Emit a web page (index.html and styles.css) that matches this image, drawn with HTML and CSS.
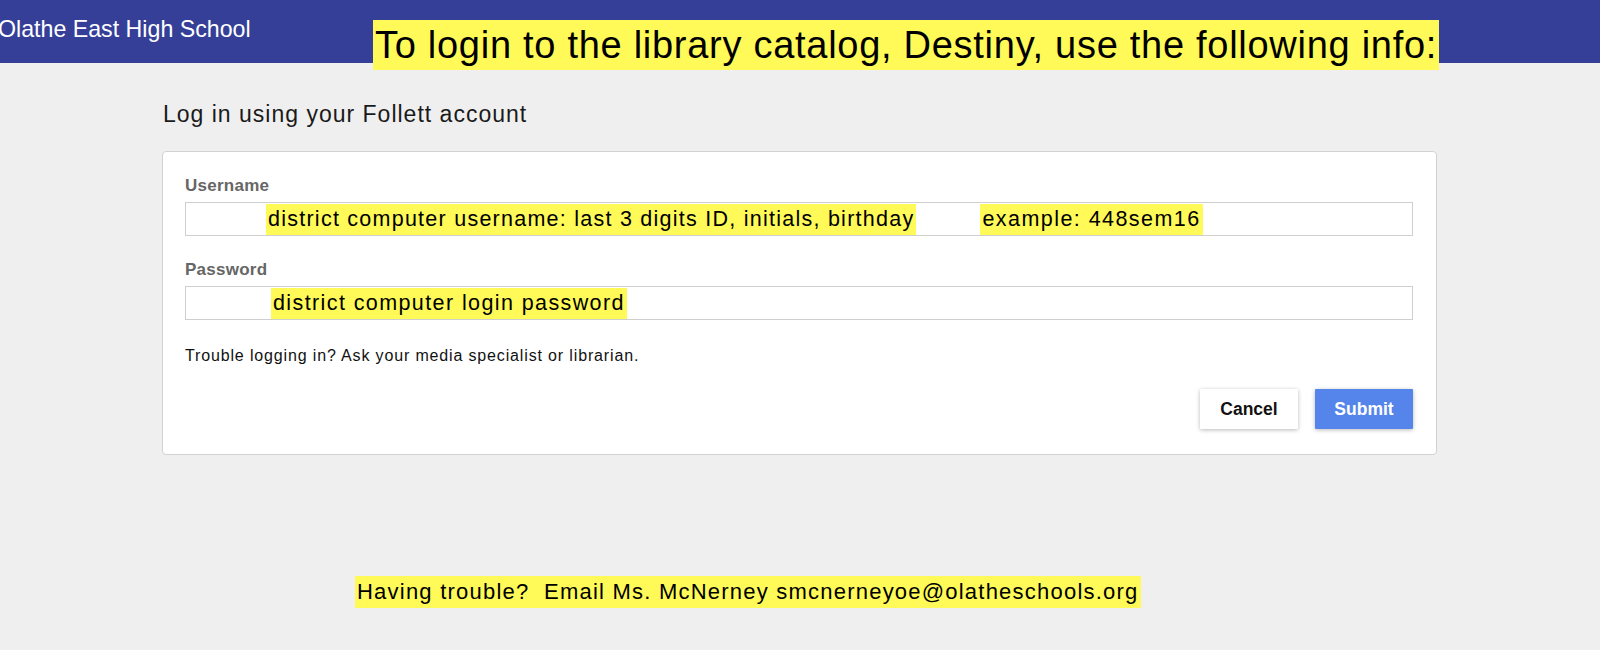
FILE: index.html
```html
<!DOCTYPE html>
<html lang="en">
<head>
<meta charset="utf-8">
<title>Olathe East High School - Destiny login</title>
<link rel="stylesheet" href="styles.css">
</head>
<body>
<header class="topbar">
  <div class="school">Olathe East High School</div>
  <div class="banner">To login to the library catalog, Destiny, use the following info:</div>
</header>
<main class="page">
  <h1 class="subtitle">Log in using your Follett account</h1>
  <section class="card">
    <div class="field">
      <div class="label">Username</div>
      <div class="input">
        <span class="hl hl-user">district computer username: last 3 digits ID, initials, birthday</span>
        <span class="hl hl-example">example: 448sem16</span>
      </div>
    </div>
    <div class="field">
      <div class="label">Password</div>
      <div class="input input-pass">
        <span class="hl hl-pass">district computer login password</span>
      </div>
    </div>
    <p class="trouble">Trouble logging in? Ask your media specialist or librarian.</p>
    <div class="actions">
      <button class="btn btn-cancel" type="button">Cancel</button>
      <button class="btn btn-submit" type="button">Submit</button>
    </div>
  </section>
</main>
<div class="note-row">
  <span class="note">Having trouble?&nbsp; Email Ms. McNerney smcnerneyoe@olatheschools.org</span>
</div>
</body>
</html>
```
FILE: styles.css
```css
* { box-sizing: border-box; }

html, body {
  margin: 0;
  padding: 0;
}

body {
  background: #efefef;
  font-family: "Liberation Sans", Arial, Helvetica, sans-serif;
  color: #111;
  overflow: hidden;
}

.topbar {
  position: relative;
  height: 63px;
  background: #353f98;
  padding-top: 16px;
}

.school {
  margin-left: -2px;
  color: #fff;
  font-size: 23.2px;
  line-height: 26px;
}

.banner {
  position: absolute;
  left: 373px;
  top: 20px;
  height: 50px;
  padding: 1px 2px 0 2px;
  background: #fffa57;
  color: #000;
  font-size: 38px;
  line-height: 49px;
  letter-spacing: 0.72px;
  white-space: nowrap;
}

.page {
  width: 1275px;
  margin-left: 162px;
}

.subtitle {
  margin: 37px 0 0 1px;
  font-size: 23px;
  line-height: 28px;
  font-weight: normal;
  letter-spacing: 1px;
  color: #1a1a1a;
}

.card {
  margin-top: 23px;
  background: #fff;
  border: 1px solid #d2d2d2;
  border-radius: 4px;
  padding: 24px 23px 25px 22px;
}

.field + .field {
  margin-top: 24px;
}

.label {
  font-size: 17px;
  line-height: 20px;
  font-weight: bold;
  letter-spacing: 0.25px;
  color: #666;
}

.input {
  margin-top: 6px;
  height: 34px;
  border: 1px solid #cfcfcf;
  background: #fff;
  display: flex;
  align-items: flex-end;
  padding-left: 80px;
}

.input-pass {
  padding-left: 85px;
}

.hl {
  display: block;
  height: 31px;
  padding: 0 2px;
  background: #fffa57;
  color: #000;
  font-size: 21.5px;
  line-height: 31px;
  letter-spacing: 1.25px;
  white-space: nowrap;
}

.hl-example {
  margin-left: 64px;
  letter-spacing: 1.45px;
}

.hl-pass {
  letter-spacing: 1.4px;
}

.trouble {
  margin: 26px 0 0 0;
  font-size: 16px;
  line-height: 20px;
  letter-spacing: 0.85px;
  color: #111;
}

.actions {
  margin-top: 23px;
  display: flex;
  justify-content: flex-end;
  gap: 17px;
}

.btn {
  width: 98px;
  height: 40px;
  border: none;
  border-radius: 1px;
  font-family: inherit;
  font-size: 17.5px;
  font-weight: bold;
  box-shadow: 0 1px 4px rgba(0, 0, 0, 0.28);
  padding: 0;
}

.btn-cancel {
  background: #fff;
  color: #111;
}

.btn-submit {
  background: #5584ea;
  color: #fff;
}

.note-row {
  margin-top: 121px;
  padding-left: 355px;
}

.note {
  display: inline-block;
  height: 32px;
  padding: 0 2px;
  background: #fffa57;
  color: #000;
  font-size: 22px;
  line-height: 32px;
  letter-spacing: 1.22px;
  white-space: nowrap;
}
```
